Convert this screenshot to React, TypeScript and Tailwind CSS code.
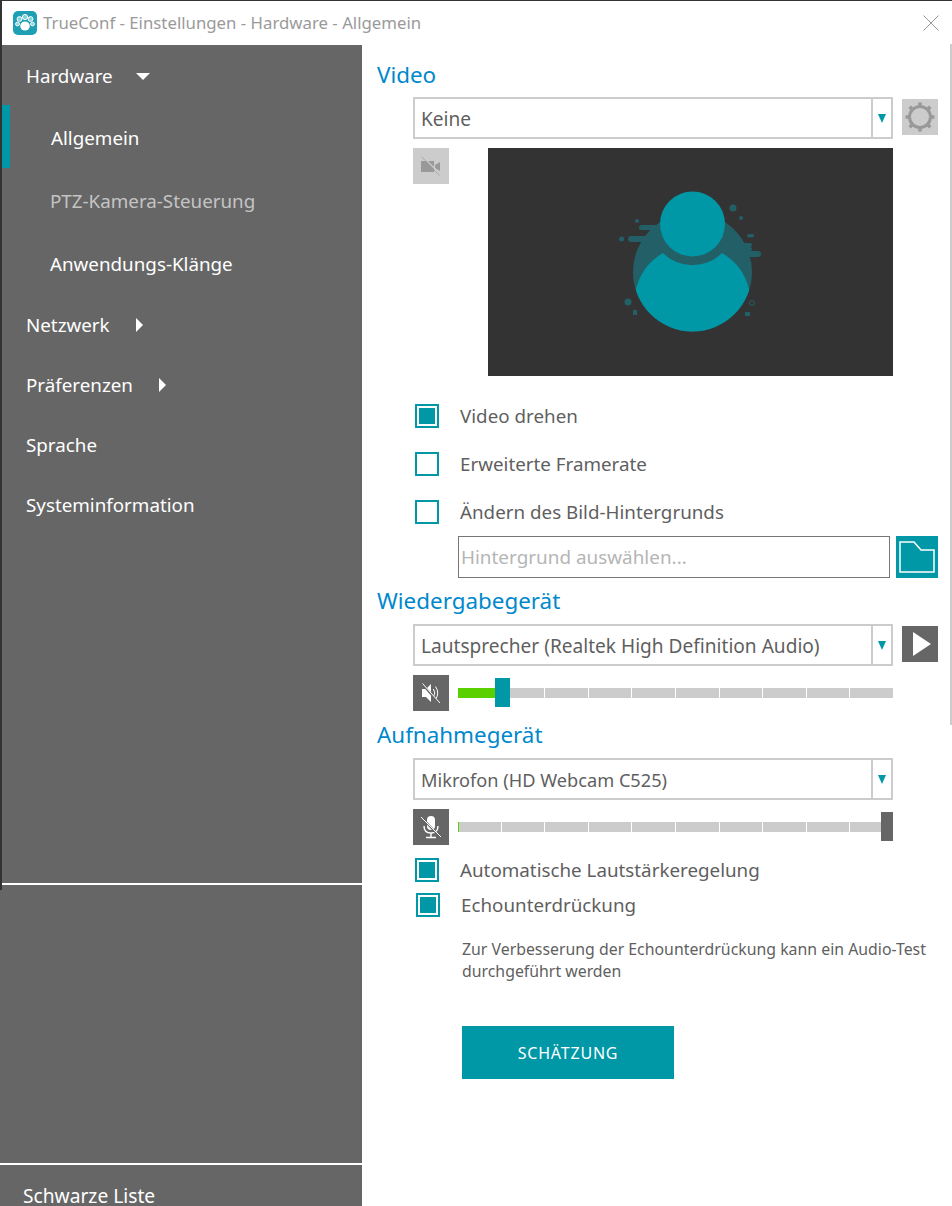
import { useId } from "react";

const TEAL = "#0097a7";

function Logo() {
  return (
    <svg width="24" height="24" viewBox="0 0 24 24" className="shrink-0">
      <rect x="0" y="0" width="24" height="24" rx="5" fill="#1e9fb4" />
      <g fill="#86d0da" stroke="#ffffff" strokeWidth="1">
        <circle cx="6.500" cy="8" r="2.400" />
        <circle cx="12" cy="6" r="2.600" />
        <circle cx="17.500" cy="8" r="2.400" />
        <circle cx="4.500" cy="13" r="1.900" />
        <circle cx="19.500" cy="13" r="1.900" />
      </g>
      <ellipse cx="12" cy="15" rx="4.800" ry="4.600" fill="#ffffff" />
    </svg>
  );
}

function Heading({ children, className }: { children: string; className: string }) {
  return <h2 className={`text-[22.4px] leading-[30px] text-[#0088cc] ${className}`}>{children}</h2>;
}

function Select({ value, textClass = "text-[19.1px]" }: { value: string; textClass?: string }) {
  return (
    <div className="flex h-[42px] w-[480px] border-2 border-[#cccccc] bg-white">
      <div className={`flex-1 pl-[6px] leading-[40px] text-[#5f5f5f] ${textClass}`}>{value}</div>
      <div className="flex w-[20px] items-center justify-center border-l-2 border-[#cccccc]">
        <div className="h-0 w-0 border-x-[4px] border-t-[9px] border-x-transparent border-t-[#0097a7]" />
      </div>
    </div>
  );
}

function Check({ on, className = "", label }: { on: boolean; className?: string; label: string }) {
  return (
    <div className={`flex items-center ${className}`}>
      <div className="flex h-6 w-6 items-center justify-center border-2 border-[#0097a7] bg-white">
        {on && <div className="h-4 w-4 bg-[#0097a7]" />}
      </div>
      <span className="ml-[21px] text-[18.8px] leading-6 text-[#5f5f5f]">{label}</span>
    </div>
  );
}

// volume track: ten grey segments with a green level on top
function Track({ level, knob, knobWidth, knobColor }: { level: number; knob: number; knobWidth: number; knobColor: string }) {
  return (
    <div className="relative ml-[9px] flex h-[36px] w-[435px] items-center">
      <div className="flex h-[10px] w-full gap-[1px]">
        {Array.from({ length: 10 }).map((_, i) => (
          <div key={i} className="flex-1 bg-[#cccccc]" />
        ))}
      </div>
      <div className="absolute top-[13px] left-0 h-[10px] bg-[#5ad000]" style={{ width: level }} />
      <div className="absolute top-[3px] h-[29px]" style={{ left: knob, width: knobWidth, background: knobColor }} />
    </div>
  );
}

function Avatar() {
  const id = useId();
  return (
    <svg width="180" height="160" viewBox="0 0 180 160">
      <defs>
        <clipPath id={id}>
          <circle cx="92.500" cy="92" r="59.500" />
        </clipPath>
      </defs>
      <circle cx="92.500" cy="92" r="59.500" fill="#235f66" />
      <g fill="#235f66">
        <rect x="39" y="45" width="24" height="5" rx="2.500" />
        <rect x="28" y="56" width="30" height="6" rx="3" />
        <rect x="135" y="67" width="17" height="4" rx="2" />
        <rect x="145" y="71" width="16" height="6" rx="3" />
        <rect x="143" y="63" width="9" height="4" rx="2" />
        <rect x="147" y="54" width="7" height="3.500" rx="1.750" />
        <circle cx="133" cy="28" r="3.500" />
        <circle cx="141" cy="38" r="2" />
        <circle cx="37" cy="41" r="2" />
        <circle cx="21.500" cy="59" r="2.500" />
        <circle cx="28" cy="122" r="3.500" />
        <rect x="33" y="130" width="4" height="5" />
        <rect x="145" y="132" width="5" height="4" />
        <circle cx="152" cy="123" r="2.500" fill="none" stroke="#235f66" />
      </g>
      <path
        d="M36 109 A58 58 0 0 1 63 73 A41.500 41.500 0 0 0 122 73 A58 58 0 0 1 149 109 L152 160 L33 160 Z"
        fill="#0097a7"
        clipPath={`url(#${id})`}
      />
      <circle cx="92.500" cy="44" r="32.500" fill="#0097a7" />
    </svg>
  );
}

export default function App() {
  return (
    <div className="relative h-[1206px] w-[952px] overflow-hidden bg-white font-['Noto_Sans','Open_Sans',sans-serif]">
      {/* window edges */}
      <div className="absolute top-0 left-0 h-px w-full bg-[#333333]" />
      <div className="absolute top-0 left-0 z-10 h-[890px] w-[2px] bg-[#333333]" />
      <div className="absolute top-[44px] right-0 h-[681px] w-[2px] bg-[#cccccc]" />

      {/* title bar */}
      <div className="flex h-[45px] items-center pl-[13px]">
        <Logo />
        <span className="ml-[6px] text-[16.8px] text-[#9a9a9a]">TrueConf - Einstellungen - Hardware - Allgemein</span>
        <svg width="16" height="16" viewBox="0 0 16 16" className="absolute top-[15px] right-[13px]" stroke="#9a9a9a" strokeWidth="1">
          <path d="M0.500 0.500 L15.500 15.500 M15.500 0.500 L0.500 15.500" />
        </svg>
      </div>

      <div className="flex">
        {/* sidebar */}
        <aside className="w-[362px] pl-[2px]">
          <div className="h-[840px] border-b-2 border-white bg-[#666666] text-[18.8px] text-white">
            <div className="flex h-[60px] items-center pt-[2px] pl-[24px]">
              <span>Hardware</span>
              <div className="ml-[23px] h-0 w-0 border-x-[7px] border-t-[7px] border-x-transparent border-t-white" />
            </div>
            <div className="flex h-[63px] items-center border-l-[8px] border-[#0097a7] pt-[3px] pl-[41px]">Allgemein</div>
            <div className="flex h-[63px] items-center pt-[3px] pl-[48px] text-[#c4c4c4]">PTZ-Kamera-Steuerung</div>
            <div className="flex h-[63px] items-center pt-[3px] pl-[48px]">Anwendungs-Klänge</div>
            <div className="flex h-[60px] items-center pt-[2px] pl-[24px]">
              <span>Netzwerk</span>
              <div className="ml-[26px] h-0 w-0 border-y-[7px] border-l-[7px] border-y-transparent border-l-white" />
            </div>
            <div className="flex h-[60px] items-center pt-[2px] pl-[24px]">
              <span>Präferenzen</span>
              <div className="ml-[26px] h-0 w-0 border-y-[7px] border-l-[7px] border-y-transparent border-l-white" />
            </div>
            <div className="flex h-[60px] items-center pt-[2px] pl-[24px]">Sprache</div>
            <div className="flex h-[60px] items-center pt-[2px] pl-[24px]">Systeminformation</div>
          </div>
          <div className="-ml-[2px] h-[278px] bg-[#666666]" />
          <div className="-ml-[2px] h-[43px] border-t-2 border-white bg-[#666666] pt-[17px] pl-[23px] text-[19.2px] leading-[28px] text-white">
            Schwarze Liste
          </div>
        </aside>

        {/* settings panel */}
        <main className="flex-1 pl-[15px]">
          <Heading className="mt-[15px]">Video</Heading>
          <div className="mt-[7px] ml-[36px] flex">
            <Select value="Keine" />
            <div className="mt-[2px] ml-[9px] flex h-9 w-9 items-center justify-center bg-[#cccccc]">
              <svg width="32" height="32" viewBox="0 0 32 32">
                <circle cx="16" cy="16" r="10.500" fill="none" stroke="#999999" strokeWidth="3" />
                <g stroke="#999999" strokeWidth="3.500">
                  <path d="M16 1.500v4M16 26.500v4M1.500 16h4M26.500 16h4M5.700 5.700l2.800 2.800M23.500 23.500l2.800 2.800M26.300 5.700l-2.800 2.800M8.500 23.500l-2.800 2.800" />
                </g>
              </svg>
            </div>
          </div>
          <div className="mt-[9px] ml-[36px] flex">
            <div className="flex h-9 w-9 items-center justify-center bg-[#cccccc]">
              <svg width="22" height="20" viewBox="0 0 22 20">
                <path d="M1 5h13v11H1zM15 9l5-3v9l-5-3z" fill="#999999" />
                <path d="M2.500 0.500l18 18" stroke="#cccccc" strokeWidth="1.500" />
                <path d="M1.500 0.500l18 19" stroke="#999999" strokeWidth="0.700" />
              </svg>
            </div>
            <div className="ml-[39px] flex h-[228px] w-[405px] items-center justify-center bg-[#333333] pr-[1px] pb-[4px]">
              <Avatar />
            </div>
          </div>

          <Check on label="Video drehen" className="mt-[28px] ml-[38px]" />
          <Check on={false} label="Erweiterte Framerate" className="mt-[24px] ml-[38px]" />
          <Check on={false} label="Ändern des Bild-Hintergrunds" className="mt-[24px] ml-[38px]" />

          <div className="mt-[12px] ml-[81px] flex">
            <div className="h-[42px] w-[432px] border border-[#777777] pl-[2px] text-[18.9px] leading-[40px] text-[#b5b5b5]">
              Hintergrund auswählen...
            </div>
            <div className="ml-[6px] flex h-[42px] w-[42px] items-center justify-center bg-[#0097a7]">
              <svg width="36" height="32" viewBox="0 0 36 32" fill="none" stroke="#ffffff" strokeWidth="1.500">
                <path d="M1 1h14l7 8h13v22H1z" />
              </svg>
            </div>
          </div>

          <Heading className="mt-[8px]">Wiedergabegerät</Heading>
          <div className="mt-[8px] ml-[36px] flex">
            <Select value="Lautsprecher (Realtek High Definition Audio)" />
            <div className="mt-[2px] ml-[9px] flex h-9 w-9 items-center justify-center bg-[#666666]">
              <div className="ml-[3px] h-0 w-0 border-y-[12px] border-l-[18px] border-y-transparent border-l-white" />
            </div>
          </div>
          <div className="mt-[9px] ml-[36px] flex">
            <div className="flex h-9 w-9 items-center justify-center bg-[#666666]">
              <svg width="20" height="22" viewBox="0 0 20 22">
                <path d="M1 7h4l5-5v18l-5-5H1z" fill="#ffffff" />
                <path d="M12.500 7q2.500 4 0 8M14.500 4.500q4.500 6.500 0 13" fill="none" stroke="#ffffff" strokeWidth="1" />
                <path d="M2 3l17 19" stroke="#666666" strokeWidth="2" />
                <path d="M1.500 1.500l17.500 19.500" stroke="#ffffff" strokeWidth="1" />
              </svg>
            </div>
            <Track level={37} knob={37} knobWidth={15} knobColor={TEAL} />
          </div>

          <Heading className="mt-[9px]">Aufnahmegerät</Heading>
          <div className="mt-[8px] ml-[36px]">
            <Select value="Mikrofon (HD Webcam C525)" textClass="text-[18.2px]" />
          </div>
          <div className="mt-[9px] ml-[36px] flex">
            <div className="flex h-9 w-9 items-center justify-center bg-[#666666]">
              <svg width="22" height="24" viewBox="0 0 22 24">
                <rect x="7" y="1" width="8" height="14" rx="4" fill="#ffffff" />
                <path d="M4 11q0 7 7 7t7-7M11 18v4M6 22.500h10" fill="none" stroke="#ffffff" strokeWidth="1.400" />
                <path d="M2 3l19 20" stroke="#666666" strokeWidth="2" />
                <path d="M1 2l20 20" stroke="#ffffff" strokeWidth="1" />
              </svg>
            </div>
            <Track level={1} knob={423} knobWidth={12} knobColor="#666666" />
          </div>
          <Check on label="Automatische Lautstärkeregelung" className="mt-[13px] ml-[38px]" />
          <Check on label="Echounterdrückung" className="mt-[11px] ml-[39px]" />

          <p className="mt-[21px] ml-[85px] w-[480px] text-[15.85px] leading-[22px] text-[#5f5f5f]">
            Zur Verbesserung der Echounterdrückung kann ein Audio-Test durchgeführt werden
          </p>
          <div className="mt-[44px] ml-[85px] flex h-[53px] w-[212px] items-center justify-center bg-[#0097a7] text-[16px] tracking-[0.8px] text-white">
            SCHÄTZUNG
          </div>
        </main>
      </div>
    </div>
  );
}
